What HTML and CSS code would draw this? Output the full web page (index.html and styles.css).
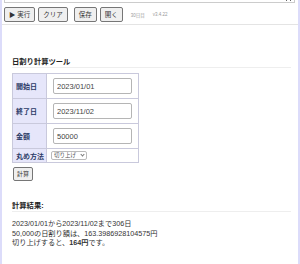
FILE: index.html
```html
<!DOCTYPE html>
<html lang="ja">
<head>
    <meta charset="UTF-8">
    <meta name="viewport" content="width=device-width, initial-scale=1.0">
    <title>日割り計算ツール</title>
    <link rel="stylesheet" href="styles.css">
</head>
<body>
    <div class="page">
        <div class="editor">
            <textarea class="code">// 日割り計算
calc(start, end, amount)</textarea>
        </div>
        <div class="toolbar">
            <button class="tool-btn">▶ 実行</button>
            <button class="tool-btn">クリア</button>
            <button class="tool-btn group">保存</button>
            <button class="tool-btn">開く</button>
            <span class="meta">30日目</span>
            <span class="meta">v3.4.22</span>
        </div>
        <div class="output">
            <h3 class="title">日割り計算ツール</h3>
            <table class="form">
                <tr>
                    <th>開始日</th>
                    <td><input type="text" value="2023/01/01"></td>
                </tr>
                <tr>
                    <th>終了日</th>
                    <td><input type="text" value="2023/11/02"></td>
                </tr>
                <tr>
                    <th>金額</th>
                    <td><input type="text" value="50000"></td>
                </tr>
                <tr>
                    <th>丸め方法</th>
                    <td class="opt">
                        <span class="select-wrap">
                            <select>
                                <option>切り上げ</option>
                                <option>切り捨て</option>
                                <option>四捨五入</option>
                            </select>
                        </span>
                    </td>
                </tr>
            </table>
            <button class="calc">計算</button>
            <h4 class="title result-title">計算結果:</h4>
            <div class="result">
                <p>2023/01/01から2023/11/02まで306日</p>
                <p>50,000の日割り額は、163.3986928104575円</p>
                <p>切り上げすると、<b>164円</b>です。</p>
            </div>
        </div>
    </div>
</body>
</html>
```

FILE: styles.css
```css
* {
    margin: 0;
    padding: 0;
    box-sizing: border-box;
}
body {
    font-family: "Liberation Sans", "Noto Sans CJK JP", sans-serif;
    color: #333;
    background: #fff;
}
.page {
    width: 300px;
    min-height: 264px;
    border-left: 2px solid #dcdcfa;
    border-right: 2px solid #dcdcfa;
}

/* エディタ（スクロールで下端だけ見えている） */
.editor {
    height: 3px;
    overflow: hidden;
    padding: 0 3px 0 2px;
}
.code {
    display: block;
    width: 100%;
    height: 40px;
    margin-top: -37px;
    border: 1px solid #ccc;
    font-size: 6px;
    color: #888;
    resize: vertical;
}

.toolbar {
    display: flex;
    align-items: center;
    gap: 3px;
    padding: 4px 2px 2px;
    border-bottom: 1px solid #e4e4e4;
}
.tool-btn {
    font-family: inherit;
    font-size: 6.5px;
    line-height: 9px;
    padding: 2px 4px;
    color: #333;
    background: #efefef;
    border: 1px solid #767676;
    border-radius: 2px;
}
.group {
    margin-left: 3px;
}
.meta {
    font-size: 4.5px;
    color: #999;
    margin-left: 5px;
}

.output {
    padding: 0 7px 0 10px;
}
.title {
    font-size: 7.3px;
    line-height: 10px;
    font-weight: bold;
    color: #222;
    margin: 32px 0 5px;
    border-bottom: 1px solid #eee;
}

.form {
    border-collapse: collapse;
    border: 1px solid #c9c9dc;
}
.form th,
.form td {
    border: 1px solid #c9c9dc;
}
.form th {
    background-color: #e6e6fa;
    color: #2b3a67;
    font-size: 7px;
    text-align: left;
    padding: 0 2px 0 3px;
}
.form td {
    padding: 4px 6px;
}
.form input {
    display: block;
    width: 79px;
    height: 16px;
    padding: 0 3px;
    font-family: inherit;
    font-size: 7.5px;
    color: #444;
    border: 1px solid #b5b5b5;
    border-radius: 2px;
}
.form .opt {
    padding: 2px 4px;
}
.select-wrap {
    position: relative;
    display: block;
    width: fit-content;
}
.select-wrap::after {
    content: "";
    position: absolute;
    right: 3px;
    top: 2px;
    width: 2px;
    height: 2px;
    border-right: 1px solid #777;
    border-bottom: 1px solid #777;
    transform: rotate(45deg);
    pointer-events: none;
}
.form select {
    display: block;
    -webkit-appearance: none;
    appearance: none;
    height: 9px;
    padding: 0 9px 0 2px;
    font-family: inherit;
    font-size: 5.5px;
    line-height: 7px;
    color: #555;
    border: 1px solid #bbb;
    border-radius: 2px;
    background: #fff;
}

.calc {
    display: block;
    margin: 4px 0 0 1px;
    font-family: inherit;
    font-size: 6px;
    line-height: 8px;
    padding: 2px 3px;
    color: #333;
    background: #efefef;
    border: 1px solid #767676;
    border-radius: 2px;
}

.result-title {
    margin: 20px 0 7px;
}
.result {
    font-size: 7.2px;
    line-height: 9.5px;
    color: #333;
}
```
